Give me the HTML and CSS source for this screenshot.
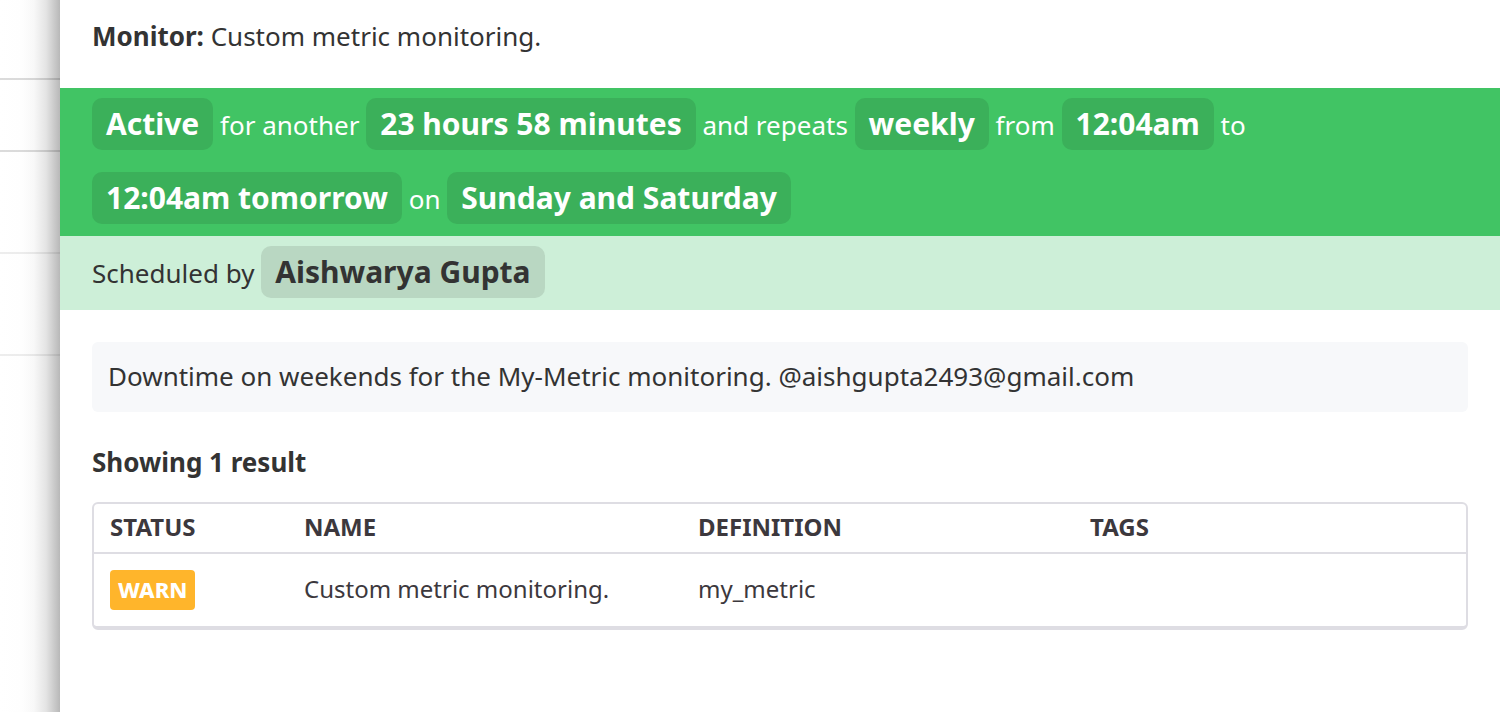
FILE: index.html
```html
<!DOCTYPE html>
<html lang="en">
<head>
<meta charset="utf-8">
<meta name="viewport" content="width=device-width, initial-scale=1">
<title>Monitor downtime</title>
<link rel="stylesheet" href="styles.css">
</head>
<body>
<div class="layout">
  <div class="backdrop" aria-hidden="true">
    <div class="backdrop-row backdrop-top"></div>
    <div class="backdrop-row backdrop-head"></div>
    <div class="backdrop-row backdrop-item"></div>
    <div class="backdrop-row backdrop-item"></div>
  </div>
  <main class="panel">
    <p class="monitor"><strong>Monitor:</strong> Custom metric monitoring.</p>
    <p class="schedule"><strong class="pill">Active</strong> for another <strong class="pill">23 hours 58 minutes</strong> and repeats <strong class="pill">weekly</strong> from <strong class="pill">12:04am</strong> to <strong class="pill">12:04am tomorrow</strong> on <strong class="pill">Sunday and Saturday</strong></p>
    <p class="author">Scheduled by <strong class="pill pill-author">Aishwarya Gupta</strong></p>
    <section class="content">
      <p class="message">Downtime on weekends for the My-Metric monitoring. @aishgupta2493@gmail.com</p>
      <h2 class="results-title">Showing 1 result</h2>
      <div class="table-frame">
        <table class="results">
          <colgroup><col class="col-status"><col class="col-name"><col class="col-definition"><col></colgroup>
          <thead><tr><th scope="col">STATUS</th><th scope="col">NAME</th><th scope="col">DEFINITION</th><th scope="col">TAGS</th></tr></thead>
          <tbody><tr><td><span class="status">WARN</span></td><td>Custom metric monitoring.</td><td>my_metric</td><td></td></tr></tbody>
        </table>
      </div>
    </section>
  </main>
</div>
</body>
</html>
```
FILE: styles.css
```css
* { box-sizing: border-box; }
body {
  margin: 0;
  font-family: "Noto Sans", "Open Sans", sans-serif;
  font-size: 26px;
  line-height: 36px;
  color: #333;
  background: #fff;
}
p, h2 { margin: 0; }
.layout { display: flex; min-height: 100vh; }
.backdrop { flex: 0 0 60px; background: linear-gradient(to right, #fff 0, #fefefe 22px, #f8f8f8 34px, #e4e4e4 46px, #b8b8b8 60px); }
.backdrop-row { border-bottom: 2px solid rgba(0, 0, 0, 0.07); }
.backdrop-top { height: 80px; border-color: rgba(0, 0, 0, 0.14); }
.backdrop-head { height: 72px; border-color: rgba(0, 0, 0, 0.14); }
.backdrop-item { height: 102px; }
.panel { flex: 1; min-width: 0; background: #fff; }
.monitor { padding: 18px 32px 34px; }
.schedule { padding: 0 32px; line-height: 74px; color: #fff; background: #41c464; }
.pill {
  display: inline-block;
  padding: 8px 14px;
  border-radius: 10px;
  font-size: 30px;
  line-height: 36px;
  background: #3bb05a;
}
.author { padding: 0 32px; line-height: 74px; background: #cdefd8; }
.pill-author { background: #b9d7c2; }
.content { padding: 32px; }
.message { padding: 16px 16px 18px; border-radius: 6px; background: #f7f8fa; }
.results-title { margin: 32px 0 22px; font-size: 26px; line-height: 36px; }
.table-frame { border: 2px solid #dedde3; border-bottom-width: 4px; border-radius: 6px; }
.results { width: 100%; table-layout: fixed; border-collapse: separate; border-spacing: 0; font-size: 24px; line-height: 36px; color: #3c383d; }
.results th { padding: 5px 16px 7px; text-align: left; font-weight: 700; border-bottom: 2px solid #dedde3; }
.results td { padding: 17px 16px 19px; vertical-align: top; }
.results td:first-child { padding: 16px; }
.col-status { width: 194px; }
.col-name { width: 394px; }
.col-definition { width: 392px; }
.status { display: block; width: max-content; padding: 1px 8px 3px; border-radius: 4px; font-size: 22px; font-weight: 800; color: #fff; background: #ffb52b; }
```
